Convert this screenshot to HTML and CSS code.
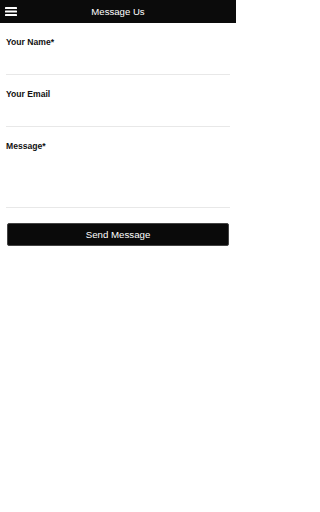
FILE: index.html
```html
<!DOCTYPE html>
<html>
<head>
<meta charset="utf-8">
<meta name="viewport" content="width=236">
<link rel="stylesheet" href="styles.css">
</head>
<body>
<div class="page">
<header class="topbar">
  <svg class="menu" width="12" height="10" viewBox="0 0 12 10">
    <rect x="0" y="0" width="12" height="2" rx="0.6" fill="#fff"/>
    <rect x="0" y="3.5" width="12" height="2" rx="0.6" fill="#fff"/>
    <rect x="0" y="7" width="12" height="2" rx="0.6" fill="#fff"/>
  </svg>
  <div class="title">Message Us</div>
</header>
<form class="form">
  <div class="field">
    <label class="label">Your Name*</label>
    <div class="input"></div>
  </div>
  <div class="field">
    <label class="label">Your Email</label>
    <div class="input"></div>
  </div>
  <div class="field">
    <label class="label">Message*</label>
    <div class="input textarea"></div>
  </div>
  <button type="button" class="send">Send Message</button>
</form>
</div>
</body>
</html>
```
FILE: styles.css
```css
html, body {
  margin: 0;
  padding: 0;
  background: #fff;
  font-family: "Liberation Sans", Arial, sans-serif;
}
.page {
  width: 236px;
}
.topbar {
  height: 23px;
  background: #0b0b0b;
  display: flex;
  align-items: center;
  justify-content: center;
  position: relative;
}
.menu {
  position: absolute;
  left: 5px;
  top: 7px;
}
.title {
  color: #fff;
  font-size: 9.6px;
  line-height: 23px;
}
.form {
  padding: 0 6px;
  display: flex;
  flex-direction: column;
}
.field {
  padding-top: 14px;
  border-bottom: 1px solid #e8e8e8;
  display: flex;
  flex-direction: column;
}
.label {
  font-size: 8.6px;
  font-weight: bold;
  line-height: 10px;
  color: #111;
}
.input {
  height: 27px;
}
.textarea {
  height: 56px;
}
.send {
  margin: 15px 1px 0 1px;
  height: 23px;
  box-sizing: border-box;
  background: #0a0a0a;
  color: #fff;
  border: 1px solid #444;
  border-radius: 2px;
  font-family: "Liberation Sans", Arial, sans-serif;
  font-size: 9.7px;
  line-height: 12px;
  padding: 1px 0 0 0;
}
```
